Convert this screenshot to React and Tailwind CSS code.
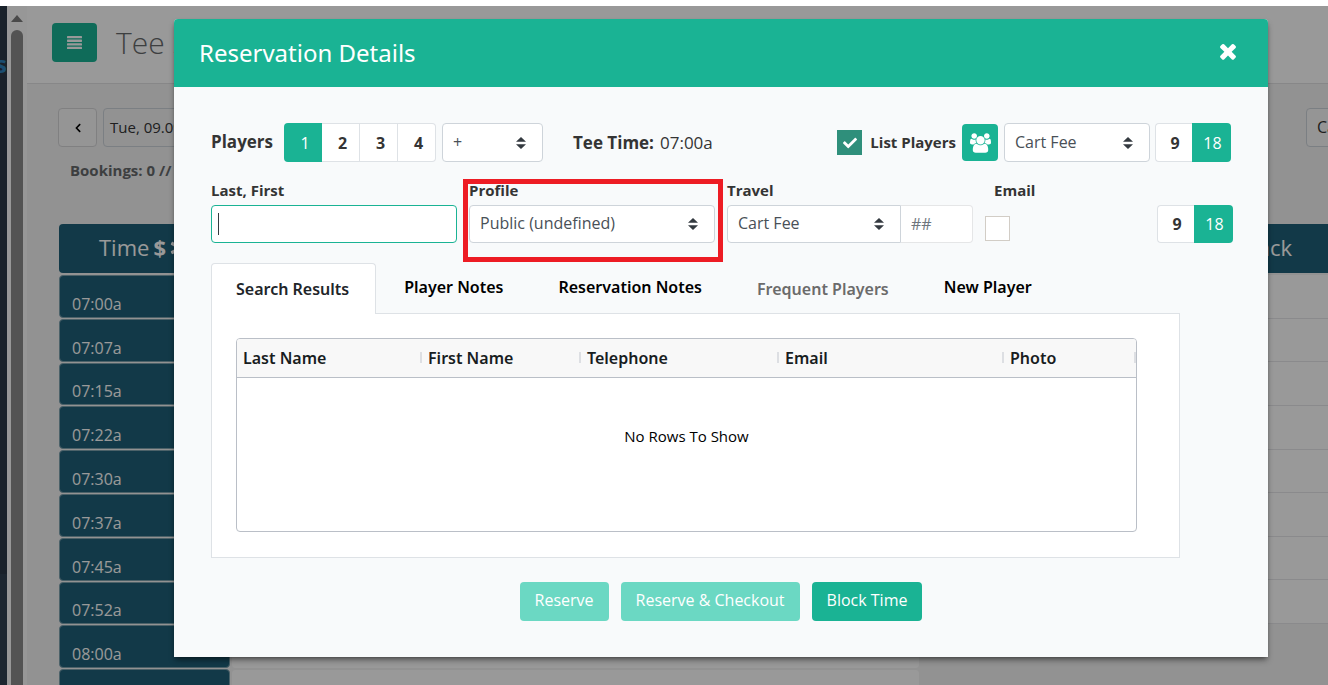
import React from "react";
import { FaAsterisk, FaCheck, FaChevronLeft } from "react-icons/fa";

const times = ["07:00a", "07:07a", "07:15a", "07:22a", "07:30a", "07:37a", "07:45a", "07:52a", "08:00a", "08:07a"];

const columns = [
  { name: "Last Name", width: "w-[185px]" },
  { name: "First Name", width: "w-[159px]" },
  { name: "Telephone", width: "w-[198px]" },
  { name: "Email", width: "w-[225px]" },
  { name: "Photo", width: "" },
];

function SelectArrows() {
  return (
    <svg viewBox="0 0 4 5" preserveAspectRatio="none" className="pointer-events-none absolute right-[17px] top-1/2 h-3 w-2.5 -translate-y-1/2 fill-[#343a40]" aria-hidden="true">
      <path d="M2 0L0 2h4zm0 5L0 3h4z" />
    </svg>
  );
}

function Select({ id, label, value, className = "", rounded = "rounded", height = "h-[39px]" }) {
  return (
    <div className={`relative ${className}`}>
      <select id={id} aria-label={label} className={`block w-full appearance-none border border-[#ced4da] bg-white pl-2.5 pr-8 pb-0.5 text-base text-[#495057] ${rounded} ${height}`}>
        <option>{value}</option>
      </select>
      <SelectArrows />
    </div>
  );
}

function Holes({ className = "", height = "h-[39px]" }) {
  return (
    <div className={`flex ${height} ${className}`}>
      <button type="button" className="w-[37px] rounded-l border border-r-0 border-[#dee2e6] bg-white pl-0.5 text-base font-bold text-[#343434]">9</button>
      <button type="button" className="w-[39px] rounded-r bg-[#1ab394] pl-0.5 text-base text-white">18</button>
    </div>
  );
}

function Backdrop() {
  return (
    <div className="flex h-full" aria-hidden="true">
      <div className="flex w-[7px] shrink-0 flex-col overflow-hidden bg-[#2b3747]">
        <div className="flex h-[568px] justify-end pt-[42px] text-2xl font-bold text-[#2d83bd]">s</div>
        <div className="grow bg-[#2f4050]" />
      </div>
      <div className="flex w-5 shrink-0 flex-col items-center bg-[#fcfcfc] pt-[9px]">
        <svg viewBox="0 0 12 7" className="h-[7px] w-3 fill-[#7c7c7c]"><path d="M6 0l6 7H0z" /></svg>
        <div className="mt-2 w-3 grow rounded-t-full bg-[#8a8a8a]" />
      </div>
      <div className="flex min-w-0 grow flex-col overflow-hidden bg-[#f3f3f4]">
        <header className="flex h-[78px] shrink-0 items-center gap-[19px] border-b border-[#e1e1e3] bg-white pb-1 pl-[25px]">
          <button type="button" className="flex h-[39px] w-[45px] items-center justify-center rounded bg-[#1ab394] text-white">
            <svg viewBox="0 0 15 13" className="h-[13px] w-[15px] fill-current">
              <rect width="15" height="2.3" rx=".6" />
              <rect y="3.6" width="15" height="2.3" rx=".6" />
              <rect y="7.2" width="15" height="2.3" rx=".6" />
              <rect y="10.7" width="15" height="2.3" rx=".6" />
            </svg>
          </button>
          <h1 className="text-3xl font-light text-[#676a6c]">Tee Sheet</h1>
        </header>
        <div className="flex shrink-0 pl-[31px] pt-6">
          <button type="button" className="flex h-[39px] w-[39px] items-center justify-center rounded border border-[#d5d5d8] bg-[#f8f8f8] text-black">
            <FaChevronLeft className="size-2.5" />
          </button>
          <div className="ml-1.5 flex h-[39px] w-48 items-center rounded border border-[#ced4da] px-1.5 text-[15px] text-[#343434]">Tue, 09.09.25</div>
          <div className="-mr-4 ml-auto h-[39px] w-[38px] rounded border border-[#ced4da] bg-[#f8f8f8] px-2.5 pt-1.5 text-base text-[#343434]">Cart</div>
        </div>
        <p className="mt-[11px] shrink-0 pl-[43px] text-[15px] leading-6 font-bold text-[#676a6c]">Bookings: 0 // 0</p>
        <div className="mt-[42px] flex shrink-0 pl-8">
          <div className="w-[171px] shrink-0">
            <div className="mb-0.5 flex h-[49px] items-center justify-center gap-1 rounded bg-[#1f6078] pb-0.5 text-[22px] text-white">
              Time <b>$</b><FaAsterisk className="size-5" />
            </div>
            <div className="flex h-[438px] flex-col">
              {times.map((t) => (
                <div key={t} className="mb-px flex grow items-end rounded border border-[#7fa3b0] bg-[#1f6078] px-3 pb-px text-base text-white">{t}</div>
              ))}
            </div>
          </div>
          <div className="mt-[51px] flex h-[438px] w-[690px] shrink-0 flex-col pl-px">
            {times.map((t) => <div key={t} className="grow rounded border border-[#f3f3f4] bg-white" />)}
          </div>
          <div className="ml-4 grow">
            <div className="flex h-[49px] items-center justify-end bg-[#1f6078] pb-0.5 pr-9 text-[22px] text-white">Back</div>
            <div className="flex h-[351px] flex-col pt-0.5">
              {times.slice(0, 8).map((t) => <div key={t} className="grow border-b border-[#e7e7e9] bg-white" />)}
            </div>
          </div>
        </div>
      </div>
    </div>
  );
}

function Tab({ children, muted }) {
  return (
    <button type="button" role="tab" className={`h-[50px] px-[27px] font-['Noto_Sans','Open_Sans',sans-serif] text-base font-semibold ${muted ? "pt-0.5 text-[#6b6b6b]" : "pb-0.5 text-black"}`}>
      {children}
    </button>
  );
}

export default function App() {
  return (
    <div className="h-screen overflow-hidden bg-white pt-1.5 font-['Open_Sans','Noto_Sans',sans-serif]">
      <div className="relative h-full">
        <Backdrop />
        <div className="absolute inset-0 bg-black/40 pl-[174px] pr-[60px] pt-[13px]">
          <section role="dialog" aria-label="Reservation Details" className="rounded-t bg-[#f8fafb] shadow-md shadow-black/40">
            <header className="flex h-[68px] items-center justify-between rounded-t bg-[#1ab394] pl-[25px] pr-7 text-white">
              <h2 className="font-['Noto_Sans','Open_Sans',sans-serif] text-2xl">Reservation Details</h2>
              <button type="button" aria-label="Close" className="pb-1">
                <svg viewBox="0 0 1792 1792" className="size-6 fill-white"><path d="M1490 1322q0 40-28 68l-136 136q-28 28-68 28t-68-28l-294-294-294 294q-28 28-68 28t-68-28l-136-136q-28-28-28-68t28-68l294-294-294-294q-28-28-28-68t28-68l136-136q28-28 68-28t68 28l294 294 294-294q28-28 68-28t68 28l136 136q28 28 28 68t-28 68l-294 294 294 294q28 28 28 68z" /></svg>
              </button>
            </header>
            <form className="px-[37px] pb-9 pt-9 text-base text-[#343434]">
              <div className="flex items-center">
                <span className="w-[73px] pb-0.5 text-[17px] font-bold">Players</span>
                <div className="flex h-[39px]">
                  <button type="button" className="w-[38px] rounded-l bg-[#1ab394] pl-1 text-white">1</button>
                  {["2", "3", "4"].map((n) => (
                    <button key={n} type="button" className="w-[38px] border border-l-0 border-[#dee2e6] bg-white pl-1 text-base font-bold last:rounded-r">{n}</button>
                  ))}
                </div>
                <Select label="Additional players" value="+" className="ml-1.5 w-[101px]" />
                <p className="ml-[30px] flex gap-1.5 text-[17px]"><b>Tee Time:</b> 07:00a</p>
                <label className="relative ml-auto flex items-center gap-2 text-[15px] font-bold">
                  <input type="checkbox" defaultChecked className="size-[25px] appearance-none bg-[#2f8f7b]" />
                  <FaCheck className="pointer-events-none absolute left-1.5 size-3.5 text-white" />
                  List Players
                </label>
                <button type="button" aria-label="Show group" className="ml-1.5 flex h-[37px] w-9 items-center justify-center rounded bg-[#1ab394]">
                  <svg viewBox="0 0 1920 1792" className="h-5 w-[21px] fill-white"><path d="M593 896q-162 5-265 128h-134q-82 0-138-40.500t-56-118.500q0-353 124-353 6 0 43.500 21t97.500 42.500 119 21.500q67 0 133-23-5 37-5 66 0 139 81 256zM1664 1533q0 120-73 189.500t-194 69.500h-874q-121 0-194-69.500t-73-189.500q0-53 3.500-103.500t14-109 26.500-108.500 43-97.500 62-81 85.500-53.500 111.500-20q10 0 43 21.500t73 48 107 48 135 21.500 135-21.500 107-48 73-48 43-21.500q61 0 111.500 20t85.500 53.500 62 81 43 97.500 26.500 108.500 14 109 3.500 103.500zM640 256q0 106-75 181t-181 75-181-75-75-181 75-181 181-75 181 75 75 181zM1344 640q0 159-112.500 271.500t-271.500 112.500-271.500-112.500-112.500-271.500 112.500-271.500 271.500-112.500 271.500 112.500 112.500 271.500zM1920 865q0 78-56 118.500t-138 40.500h-134q-103-123-265-128 81-117 81-256 0-29-5-66 66 23 133 23 59 0 119-21.500t97.500-42.500 43.500-21q124 0 124 353zM1792 256q0 106-75 181t-181 75-181-75-75-181 75-181 181-75 181 75 75 181z" /></svg>
                </button>
                <Select label="Travel for all" value="Cart Fee" className="ml-1.5 w-[146px]" />
                <Holes className="ml-[5px]" />
              </div>

              <div className="mt-4 flex items-start gap-3 text-[15px]">
                <div className="relative w-[246px]">
                  <label htmlFor="name" className="block h-[27px] leading-6 font-bold">Last, First</label>
                  <input id="name" type="text" className="block h-[38px] w-full rounded border border-[#1ab394] bg-white px-2 outline-none" />
                  <span className="absolute bottom-2 left-[7px] h-[22px] w-px bg-[#343a40]" />
                </div>
                <div className="relative w-[246px]">
                  <label htmlFor="profile" className="block h-[27px] leading-6 font-bold">Profile</label>
                  <Select id="profile" value="Public (undefined)" height="h-[38px]" />
                  <span className="pointer-events-none absolute -bottom-[19px] -left-1.5 -right-2 top-px border-5 border-[#ed1c24]" />
                </div>
                <div>
                  <label htmlFor="travel" className="block h-[27px] leading-6 font-bold">Travel</label>
                  <div className="flex">
                    <Select id="travel" value="Cart Fee" className="w-[174px]" rounded="rounded-l" height="h-[38px]" />
                    <input type="text" aria-label="Cart number" placeholder="##" className="h-[38px] w-[72px] rounded-r border border-l-0 border-[#e5e6e7] bg-white px-2.5 text-base placeholder:text-[#6c757d]" />
                  </div>
                </div>
                <div>
                  <label htmlFor="email" className="block h-[38px] pl-[9px] leading-6 font-bold">Email</label>
                  <input id="email" type="checkbox" className="block size-[25px] appearance-none border border-[#d2cdc6] bg-white" />
                </div>
                <Holes className="-mr-0.5 ml-auto mt-[27px]" height="h-[38px]" />
              </div>

              <div className="mr-[51px] mt-5">
                <div role="tablist" className="flex gap-px">
                  <button type="button" role="tab" aria-selected="true" className="relative -mb-px h-[51px] rounded-t border border-b-0 border-[#dee2e6] bg-white pl-6 pr-[26px] font-['Noto_Sans','Open_Sans',sans-serif] font-semibold text-[#212529]">Search Results</button>
                  <Tab>Player Notes</Tab>
                  <Tab>Reservation Notes</Tab>
                  <Tab muted>Frequent Players</Tab>
                  <Tab>New Player</Tab>
                </div>
                <div className="border border-[#dee2e6] bg-white pb-[25px] pl-6 pr-[42px] pt-6">
                  <div className="overflow-hidden rounded border border-[#babfc7]">
                    <table className="w-full table-fixed border-collapse text-left text-black">
                      <thead>
                        <tr className="h-[38px] border-b border-[#babfc7] bg-[#f8f8f8]">
                          {columns.map((c) => (
                            <th key={c.name} scope="col" className={`${c.width} p-0 font-['Noto_Sans','Open_Sans',sans-serif] font-semibold text-[#181d1f]`}>
                              <div className="flex items-center justify-between pl-1.5">
                                {c.name}
                                <span className="h-[11px] w-0.5 bg-[#dddfe3]" />
                              </div>
                            </th>
                          ))}
                        </tr>
                      </thead>
                      <tbody>
                        <tr>
                          <td colSpan={5} className="h-[154px] pb-9 text-center text-[15px]">No Rows To Show</td>
                        </tr>
                      </tbody>
                    </table>
                  </div>
                </div>
              </div>

              <div className="mt-6 flex justify-center gap-3 text-white">
                <button type="button" disabled className="h-[39px] rounded bg-[#6bd8c3] px-[15px] pb-1">Reserve</button>
                <button type="button" disabled className="h-[39px] rounded bg-[#6bd8c3] px-[15px] pb-1">Reserve &amp; Checkout</button>
                <button type="button" className="h-[39px] rounded bg-[#1ab394] px-[15px] pb-1">Block Time</button>
              </div>
            </form>
          </section>
        </div>
      </div>
    </div>
  );
}
